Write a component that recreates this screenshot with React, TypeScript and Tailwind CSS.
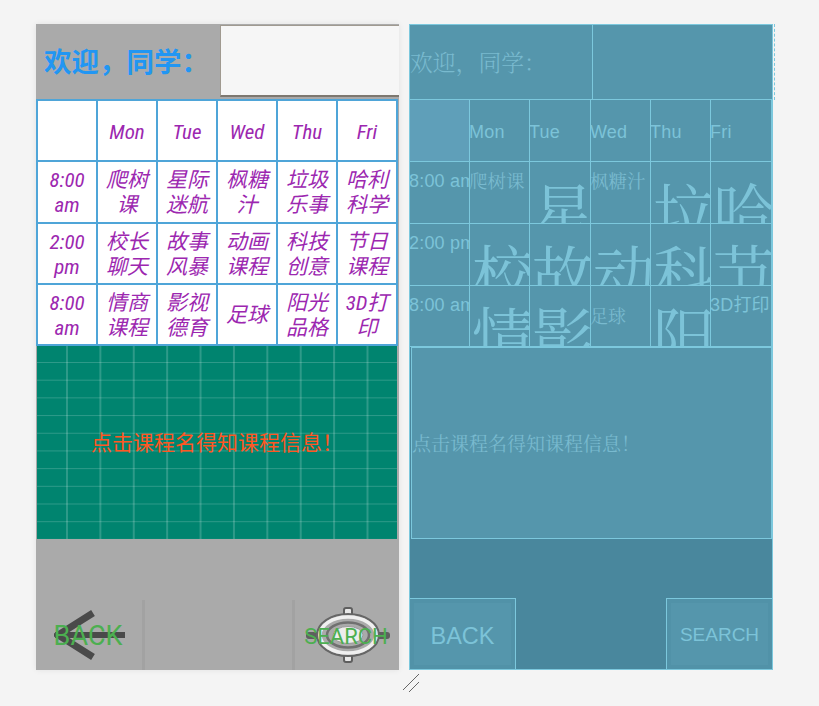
import React from 'react';

const rows = [
  ['', 'Mon', 'Tue', 'Wed', 'Thu', 'Fri'],
  ['8:00 am', '爬树课', '星际迷航', '枫糖汁', '垃圾乐事', '哈利科学'],
  ['2:00 pm', '校长聊天', '故事风暴', '动画课程', '科技创意', '节日课程'],
  ['8:00 am', '情商课程', '影视德育', '足球', '阳光品格', '3D打印'],
];

// cells with a long label blow up on the blueprint side
const bigCells = ['星际迷航', '垃圾乐事', '哈利科学', '校长聊天', '故事风暴', '动画课程', '科技创意', '节日课程', '情商课程', '影视德育', '阳光品格'];

const BackIcon = () => (
  <svg className="absolute left-[18px] top-[10px]" width="72" height="50" viewBox="0 0 72 50" fill="none">
    <path d="M1 25H71" stroke="#4a4a4a" strokeWidth="6" />
    <path d="M39 3L4 25L39 47" stroke="#4a4a4a" strokeWidth="7" />
  </svg>
);

const SearchIcon = () => (
  <svg className="absolute left-[10px] top-[6px]" width="86" height="58" viewBox="0 0 86 58" fill="none">
    <rect x="39" y="2" width="8" height="54" rx="2" fill="#e8e8e8" stroke="#5f5f5f" strokeWidth="2" />
    <rect x="1" y="26" width="84" height="7" rx="3" fill="#5f5f5f" />
    <ellipse cx="43" cy="29" rx="31" ry="21" fill="#aaaaaa" stroke="#666666" strokeWidth="2" />
    <ellipse cx="43" cy="29" rx="28" ry="18" fill="#aaaaaa" stroke="#f0f0f0" strokeWidth="3.5" />
    <ellipse cx="43" cy="29" rx="21" ry="12.5" fill="#aaaaaa" stroke="#707070" strokeWidth="2.5" />
    <ellipse cx="43" cy="29" rx="15" ry="8.5" fill="#ededed" stroke="#999999" strokeWidth="1" />
  </svg>
);

const App: React.FC = () => {
  return (
    <div className="relative w-[819px] h-[706px] overflow-hidden bg-[#f4f4f4] font-['Roboto','Noto_Sans_CJK_SC',sans-serif]">
      <div className="flex gap-[10px] pt-[24px] pl-[36px]">
        {/* design preview */}
        <div className="w-[363px] h-[646px] flex flex-col bg-[#aaaaaa] shadow-[0_0_6px_rgba(0,0,0,0.08)]">
          <div className="h-[75px] flex shrink-0">
            <div className="w-[184px] flex items-center pl-[8px] pt-[2px] text-[27.5px] font-bold text-[#2196f3] whitespace-nowrap">
              欢迎，同学：
            </div>
            <div className="w-[179px] h-[72px] mt-[1px] bg-[#f6f6f6] border-t border-l border-[#a09a90] border-b-2 border-b-[#7d7870]" />
          </div>
          <div className="w-[362px] grid grid-cols-6 bg-white border-t-2 border-l-2 border-[#4fa5d8] shrink-0">
            {rows.flat().map((label, i) => (
              <div
                key={i}
                className="h-[61.25px] flex items-center justify-center pt-[3px] border-r-2 border-b-2 border-[#4fa5d8] text-center italic text-[21px] leading-[25px] text-[#9c27b0] [font-stretch:75%]"
              >
                <span className="inline-block w-[46px]">{label}</span>
              </div>
            ))}
          </div>
          <div className="ml-[1px] w-[360px] h-[193px] shrink-0 flex items-center justify-center pt-[2px] bg-[#00846f] bg-[linear-gradient(rgba(255,255,255,0.18)_1px,transparent_1px),linear-gradient(90deg,rgba(255,255,255,0.18)_1.5px,transparent_1.5px)] bg-[size:33.4px_17.7px] bg-[position:29px_16px] text-[21px] text-[#ff5722]">
            点击课程名得知课程信息！
          </div>
          <div className="flex-1 flex items-end justify-between">
            <div className="relative w-[109px] h-[70px] border-r-[3px] border-[#a2a2a2] flex items-center justify-center text-[27px] text-[#4caf50]">
              <BackIcon />
              <span className="relative mr-[2px] mt-[2px]">BACK</span>
            </div>
            <div className="relative w-[107px] h-[70px] border-l-[3px] border-[#a2a2a2] flex items-center justify-center text-[22px] text-[#4caf50]">
              <SearchIcon />
              <span className="relative mt-[2px] ml-[-2px]">SEARCH</span>
            </div>
          </div>
        </div>

        {/* blueprint */}
        <div className="relative w-[364px] h-[646px] flex flex-col bg-[#49879d] border border-[#7cc8dd] text-[#7cc3d8] font-['Liberation_Sans','Noto_Sans_CJK_SC',sans-serif]">
          <div className="h-[75px] flex bg-[#5596ac] border-b border-[#7cc8dd] shrink-0">
            <div className="w-[183px] flex items-center border-r border-[#7cc8dd] pt-[1px] text-[22.8px] font-['Noto_Serif_CJK_SC','Noto_Sans_CJK_SC',serif] text-[#79bacf] whitespace-nowrap font-light">
              欢迎，同学：
            </div>
          </div>
          <div className="w-[362px] grid grid-cols-[60px_60px_61px_60px_60px_61px] bg-[#5596ac] shrink-0">
            {rows.flat().map((label, i) => {
              const big = bigCells.includes(label);
              const isCjk = /[\u4e00-\u9fff]/.test(label);
              return (
                <div
                  key={i}
                  className={`overflow-hidden whitespace-nowrap indent-[-1px] border-r border-b border-[#7cc8dd] ${i >= 18 ? 'h-[61px]' : 'h-[62px]'} ${i === 0 ? 'bg-[#5f9fb9]' : ''} ${
                    big
                      ? "pl-[3px] pt-[18px] text-[62px] leading-[60px] font-['Noto_Serif_CJK_SC','Noto_Sans_CJK_SC',serif] text-[#7cc3d8]"
                      : label === '足球'
                        ? "pt-[16px] text-[18px] text-[#79bacf] font-['Noto_Serif_CJK_SC','Noto_Sans_CJK_SC',serif]"
                        : i < 6
                          ? 'pt-[19px] text-[18px] tracking-[0.2px]'
                          : isCjk && label !== '3D打印'
                            ? "pt-[5px] text-[18.5px] text-[#79bacf] font-['Noto_Serif_CJK_SC','Noto_Sans_CJK_SC',serif]"
                            : 'pt-[6px] text-[18px] tracking-[0.2px]'
                  }`}
                >
                  {label}
                </div>
              );
            })}
          </div>
          <div className="ml-[1px] w-[361px] h-[192px] flex items-center bg-[#5596ac] border border-[#7cc8dd] shrink-0 text-[19px] text-[#79bacf] font-['Noto_Serif_CJK_SC','Noto_Sans_CJK_SC',serif]">
            点击课程名得知课程信息！
          </div>
          <div className="flex-1 flex items-end justify-between">
            <div className="w-[106px] h-[71px] flex items-center justify-center pt-[6px] bg-[#5596ac] border-t border-r border-[#7cc8dd] text-[23.5px] shadow-[inset_0_0_0_4px_rgba(73,135,157,0.25)]">
              BACK
            </div>
            <div className="w-[106px] h-[71px] flex items-center justify-center pt-[2px] bg-[#5596ac] border-t border-l border-[#7cc8dd] text-[19px] shadow-[inset_0_0_0_4px_rgba(73,135,157,0.25)]">
              SEARCH
            </div>
          </div>
          <div className="absolute right-[-3px] top-[-1px] h-[76px] border-r border-dashed border-[#7cc8dd]" />
        </div>
      </div>

      {/* resize handle */}
      <svg className="absolute left-[402px] top-[673px]" width="20" height="20" viewBox="0 0 20 20" fill="none">
        <path d="M1 17L17 1M7 19L17 9" stroke="#666666" strokeWidth="1" />
      </svg>
    </div>
  );
};

export default App;
